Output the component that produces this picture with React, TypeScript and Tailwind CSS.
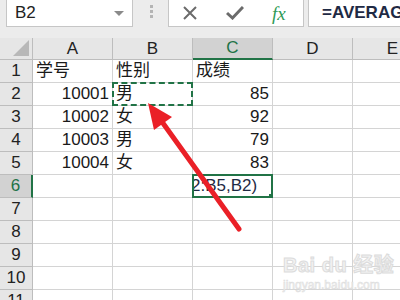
import React from "react";

const cols = ["A", "B", "C", "D", "E"];
const rows: [string, string, string][] = [
  ["学号", "性别", "成绩"],
  ["10001", "男", "85"],
  ["10002", "女", "92"],
  ["10003", "男", "79"],
  ["10004", "女", "83"],
  ["", "", ""],
  ["", "", ""],
  ["", "", ""],
  ["", "", ""],
  ["", "", ""],
  ["", "", ""],
];

const font = { fontFamily: '"Liberation Sans", "Noto Sans CJK SC", sans-serif' };

export default function App() {
  return (
    <div className="relative w-[400px] h-[300px] overflow-hidden bg-white text-[#1a1a1a]" style={font}>
      {/* formula bar */}
      <div className="h-[38px] bg-[#ececec] flex items-start">
        <div className="ml-[6px] w-[127px] h-[27px] bg-white border border-t-0 border-[#c6c6c6] flex items-center justify-between pl-[8px] pr-[8px]">
          <span className="text-[17px] text-[#222]">B2</span>
          <div className="w-0 h-0 border-l-[5px] border-r-[5px] border-t-[5px] border-l-transparent border-r-transparent border-t-[#8a8a8a]" />
        </div>
        <div className="ml-[17px] mt-[5px] flex flex-col gap-[2px]">
          <div className="w-[3px] h-[3px] bg-[#b4b4b4]" />
          <div className="w-[3px] h-[3px] bg-[#b4b4b4]" />
          <div className="w-[3px] h-[3px] bg-[#b4b4b4]" />
        </div>
        <div className="ml-[15px] w-[136px] h-[27px] bg-white border border-t-0 border-[#c6c6c6] flex items-center">
          <svg width="16" height="16" viewBox="0 0 16 16" className="ml-[13px]">
            <path d="M2 2 L14 14 M14 2 L2 14" stroke="#6b6b6b" strokeWidth="2" />
          </svg>
          <svg width="18" height="14" viewBox="0 0 18 14" className="ml-[28px]">
            <path d="M1 7 L6.5 12 L17 1" stroke="#6b6b6b" strokeWidth="3" fill="none" />
          </svg>
          <span
            className="ml-[28px] text-[19px] italic text-[#2f9a57] leading-none"
            style={{ fontFamily: '"Liberation Serif", serif' }}
          >
            fx
          </span>
        </div>
        <div className="ml-[4px] flex-1 h-[27px] bg-white border border-t-0 border-r-0 border-[#c6c6c6] flex items-center pl-[13px] overflow-hidden">
          <span className="text-[17px] font-bold text-[#1f2a44] whitespace-nowrap">=AVERAGEIF(B2:B5,B2)</span>
        </div>
      </div>

      {/* sheet */}
      <div className="grid grid-cols-[33px_80px_80px_80px_80px_80px] grid-rows-[22px] auto-rows-[23px]">
        <div className="relative bg-[#e6e6e6] border-r border-b border-[#bdbdbd]">
          <div className="absolute right-[3px] bottom-[3px] w-0 h-0 border-l-[15px] border-t-[15px] border-l-transparent border-t-transparent border-r-0 border-b-[15px] border-b-[#bdbdbd] hidden" />
          <svg width="16" height="16" viewBox="0 0 16 16" className="absolute right-[3px] bottom-[3px]">
            <path d="M16 0 L16 16 L0 16 Z" fill="#b8b8b8" />
          </svg>
        </div>
        {cols.map((c) =>
          c === "C" ? (
            <div
              key={c}
              className="bg-[#d2d2d2] border-r border-[#bdbdbd] border-b-2 border-b-[#217346] flex items-center justify-center text-[17px] text-[#217346]"
            >
              {c}
            </div>
          ) : (
            <div
              key={c}
              className="bg-[#e6e6e6] border-r border-b border-[#bdbdbd] flex items-center justify-center text-[17px] text-[#222]"
            >
              {c}
            </div>
          )
        )}
        {rows.map((r, i) => {
          const n = i + 1;
          return (
            <React.Fragment key={n}>
              {n === 6 ? (
                <div className="bg-[#d2d2d2] border-b border-[#bdbdbd] border-r-2 border-r-[#217346] flex items-center justify-center text-[17px] text-[#217346]">
                  {n}
                </div>
              ) : (
                <div className="bg-[#e6e6e6] border-r border-b border-[#bdbdbd] flex items-center justify-center text-[17px] text-[#222]">
                  {n}
                </div>
              )}
              <div
                className={
                  "border-r border-b border-[#d4d4d4] flex items-center px-[3px] text-[17px] " +
                  (n === 1 ? "justify-start" : "justify-end")
                }
              >
                {r[0]}
              </div>
              <div className="relative border-r border-b border-[#d4d4d4] flex items-center px-[3px] text-[17px]">
                {r[1]}
                {n === 2 && (
                  <div className="absolute left-[-1px] top-[-1px] w-[81px] h-[24px] border-2 border-dashed border-[#217346]" />
                )}
              </div>
              <div
                className={
                  "relative border-r border-b border-[#d4d4d4] flex items-center px-[3px] text-[17px] " +
                  (n === 1 ? "justify-start" : "justify-end")
                }
              >
                {r[2]}
                {n === 6 && (
                  <div className="absolute left-[-1px] top-[-1px] w-[81px] h-[24px] border-2 border-[#217346] bg-white flex items-center overflow-hidden">
                    <span className="ml-[-3px] text-[17px] text-[#1f2a44] whitespace-nowrap">2:B5,B2)</span>
                    <div className="absolute right-[-2px] bottom-[-2px] w-[5px] h-[5px] bg-[#217346] border border-white" />
                  </div>
                )}
              </div>
              <div className="border-r border-b border-[#d4d4d4]" />
              <div className="border-r border-b border-[#d4d4d4]" />
            </React.Fragment>
          );
        })}
      </div>

      {/* watermark */}
      <div className="absolute left-[283px] top-[255px] flex flex-col items-start pointer-events-none">
        <span className="text-[20px] font-bold text-[#f2f2f2] leading-none tracking-wide" style={{ WebkitTextStroke: "1px #dcdcdc" }}>
          Bai du 经验
        </span>
        <span className="mt-[4px] text-[12px] text-[#f2f2f2] leading-none" style={{ WebkitTextStroke: "0.5px #dcdcdc" }}>
          jingyan.baidu.com
        </span>
      </div>

      {/* red arrow */}
      <svg width="400" height="300" className="absolute left-0 top-0 pointer-events-none">
        <line x1="239" y1="229" x2="160" y2="119" stroke="#ea2027" strokeWidth="5" strokeLinecap="round" />
        <polygon points="148,103 172,117 154,130" fill="#ea2027" />
      </svg>
    </div>
  );
}
